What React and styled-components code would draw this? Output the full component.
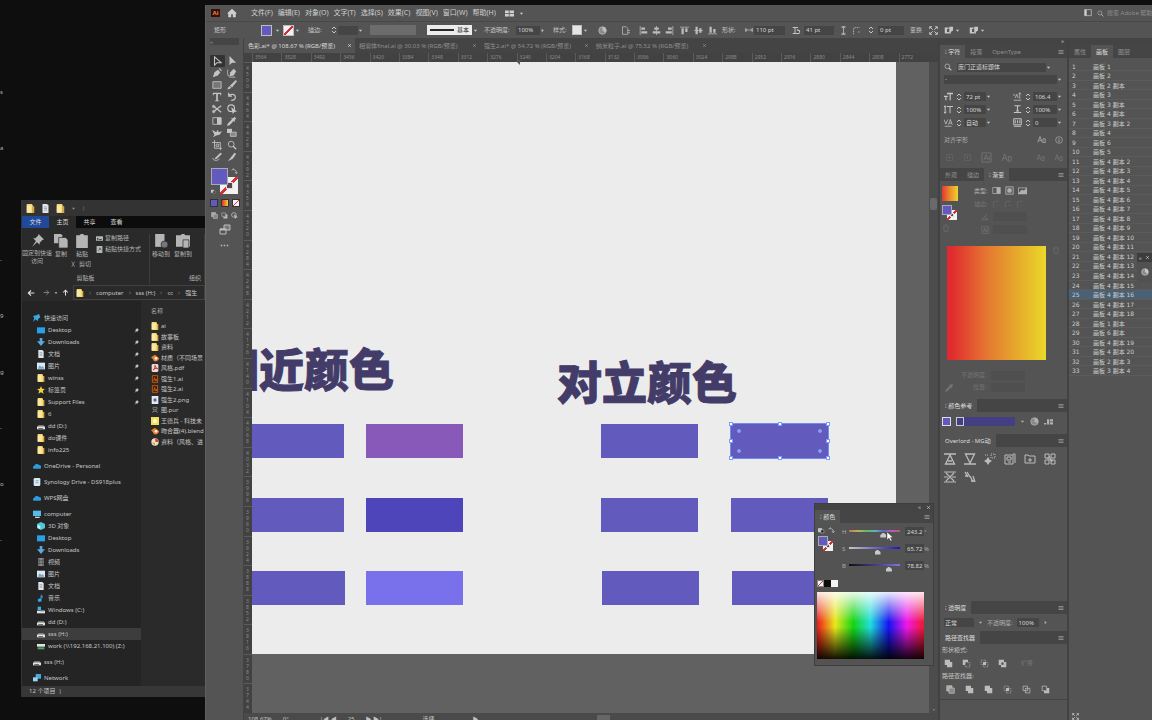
// src/App.jsx
import React, { useState } from 'react';
import styled, { createGlobalStyle, css } from 'styled-components';

const GlobalStyle = createGlobalStyle`
  * {
    box-sizing: border-box;
  }
  html, body, #root {
    height: 100%;
    margin: 0;
  }
  body {
    overflow: hidden;
    background: #0d0e0d;
    font-family: 'Noto Sans', 'Noto Sans CJK SC', sans-serif;
    font-size: 6px;
    line-height: 8px;
    color: #c6c6c6;
  }
  button, input, select {
    font: inherit;
    color: inherit;
    background: none;
    border: 0;
    padding: 0;
    margin: 0;
    min-width: 0;
  }
  button {
    display: inline-flex;
    align-items: center;
    justify-content: center;
    white-space: nowrap;
  }
  select {
    appearance: none;
  }
  a {
    color: inherit;
    text-decoration: none;
  }
`;

/* ---------- icons, all drawn on a 12 x 12 grid ---------- */

const solid = { fill: 'currentColor', stroke: 'none' };

const glyphs = {
  caret: <path {...solid} d="M2 4h8l-4 5z" />,
  right: <path {...solid} d="M4 2l5 4-5 4z" />,
  close: <path d="M3 3l6 6M9 3l-6 6" strokeWidth="2" />,
  menu: <path d="M1 3h10M1 6h10M1 9h10" strokeWidth="1.400" />,
  step: <path d="M3 4.500l3-3 3 3M3 7.500l3 3 3-3" strokeWidth="1.500" />,
  home: <path {...solid} d="M6 1L0 6.500h1.500V11H5V7.500h2V11h3.500V6.500H12z" />,
  search: <><circle cx="5" cy="5" r="3.500" /><path d="M7.500 7.500L11 11" strokeWidth="1.600" /></>,
  grid: <path {...solid} d="M0 2h5v3.500H0zM6 2h6v3.500H6zM0 6.500h5V10H0zM6 6.500h6V10H6z" />,
  select: <path d="M3 1v10l3-3h5z" strokeWidth="1.300" />,
  direct: <path {...solid} d="M3 0v11l3-3h5z" />,
  pen: <path {...solid} d="M1 11l2-6 4-3 3 3-3 4zM8 1l1-1 3 3-1 1z" />,
  curve: <><path {...solid} d="M3 10l1-5 4-4 3 3-3 5z" /><path d="M1 2c-1 5 0 9 4 9h5" /></>,
  rect: <path d="M1 2h10v8H1z" fill="#777" />,
  brush: <path {...solid} d="M10.500 0L12 1.500 6 9 3.500 7zM3 7.500l2 1.500c-1 2-3 2-5 2 2-1 1-3 3-3.500z" />,
  type: <path {...solid} d="M1 1h10v3H10L9.500 2.500H7V10l1.500.5v.5h-5v-.5L5 10V2.500H2.500L2 4H1z" />,
  rotate: <path d="M2 1v4h4M2 5c1-3 8-3 8 1 0 3-3 4-5 4" strokeWidth="1.400" />,
  scissors: <><path d="M1 2l10 8M1 10l10-8" strokeWidth="1.500" /><circle cx="2" cy="9" r="1.500" /><circle cx="2" cy="3" r="1.500" /></>,
  shape: <><circle cx="5" cy="5" r="4" strokeWidth="1.400" /><path {...solid} d="M5 4l7 5-3 .5L7 12z" /></>,
  gradient: <><path d="M1 2h10v8H1z" /><path {...solid} d="M6 2h5v8H6z" /></>,
  dropper: <path {...solid} d="M0 12l1-3 5-5-1-1 1-1 1 1 2-2 2 2-2 2 1 1-1 1-1-1-5 5z" />,
  width: <path {...solid} d="M0 2l5 3 2-3 1 3 4-1-3 4-4 1-4 2 2-3z" />,
  blend: <><path {...solid} d="M0 1h6v5H0z" /><path d="M4 5h7v5H4z" fill="#888" /></>,
  artboard: <path d="M3 0v10h9M0 3h10v9M5 5h3v3H5z" />,
  eraser: <><path d="M1 7c0 4 6 4 8 1" /><path {...solid} d="M4 7l6-6 2 1-6 6-3 1z" /></>,
  knife: <path {...solid} d="M1 11L9 1l2 1-4 6z" />,
  screens: <><path d="M5 1h6v5H5z" fill="#777" /><path d="M1 5h6v5H1z" fill="#535353" /><path d="M1 5.500h6" strokeWidth="2" /></>,
  dots: <path {...solid} d="M1 5h2v2H1zM5 5h2v2H5zM9 5h2v2H9z" />,
  swap: <path d="M1 4l3-3v2c3 0 5 1 5 5M7 7l2 3 2-3" strokeWidth="1.300" />,
  mini: <><path {...solid} d="M0 2h7v7H0z" /><path d="M5 5h5v5H5z" fill="#111" /></>,
  globe: <><circle cx="6" cy="6" r="5" fill="#8a8a8a" /><path {...solid} d="M6 1a5 5 0 0 1 4 8L6 6z" /></>,
  docset: <path d="M2 1h5l2 2v8H2zM9 6h3M9 9h3" />,
  alignL: <path {...solid} d="M1 0h1v12H1zM3 2h5v3H3zM3 7h8v3H3z" />,
  alignC: <path {...solid} d="M5.500 0h1v12h-1zM3 2h6v3H3zM1 7h10v3H1z" />,
  alignR: <path {...solid} d="M10 0h1v12h-1zM4 2h5v3H4zM1 7h8v3H1z" />,
  alignT: <path {...solid} d="M0 1h12v1H0zM2 3h3v8H2zM7 3h3v5H7z" />,
  alignM: <path {...solid} d="M0 5.500h12v1H0zM2 1h3v10H2zM7 3h3v6H7z" />,
  alignB: <path {...solid} d="M0 10h12v1H0zM2 1h3v8H2zM7 4h3v5H7z" />,
  width2: <path d="M1 3v6M11 3v6M1 6h10M3 4L1 6l2 2M9 4l2 2-2 2" />,
  link: <path d="M1 2h7M1 10h9M4 2v8M7 4l3 3M7 6h3v3" strokeWidth="1.300" />,
  height: <path d="M3 1h6M3 11h6M6 1v10M4 3l2-2 2 2M4 9l2 2 2-2" />,
  corner: <path d="M2 11V5c0-2 1-3 3-3h5M8 8h3" strokeDasharray="2 1" />,
  scatter: <path d="M1 1l4 4M11 1L7 5M1 11l4-4M11 11L7 7M1 4V1h3M8 1h3v3M11 8v3H8M4 11H1V8" strokeWidth="1.300" />,
  edit: <path {...solid} d="M1 2h5v2H4v4h3v2H1zM7 1h5v5L9 8v3L7 9z" />,
  window: <><path d="M1 1h10v9H1z" /><path {...solid} d="M1 1h3v9H1z" /></>,
  info: <><circle cx="6" cy="6" r="5" /><path d="M6 5v4M6 3v1" strokeWidth="1.400" /></>,
  sizeT: <path {...solid} d="M4 1h8v2h-3v8H7.500V3H4zM0 5h5v1.500H3.300V11H1.800V6.500H0z" />,
  leading: <path d="M1 11h10M3 8l2-5 2 5M9 1v8M7.500 3L9 1l1.500 2M0 4h3" />,
  vscale: <path d="M4 2h8M8 2v9M1.500 1v10M0 3l1.500-2L3 3M0 9l1.500 2L3 9" strokeWidth="1.300" />,
  hscale: <path d="M2 1h8M6 1v7M1 10h10M4 8h4" strokeWidth="1.500" />,
  kern: <path d="M0 2l2.500 6L5 2M6 9l2.500-7L11 9M7 7h3M1 11h9" />,
  track: <path d="M1 1h10v8H1zM3 7V3M6 7V3M9 7V3M1 11h10" strokeWidth="1.300" />,
  glyphBox: <path d="M1 1h10v10H1zM3 9l2.500-6L8 9M4 7h3M9 4v5" />,
  glyphA: <path d="M1 10l3-8 3 8M2 7h4M8 5h3v5H8z" />,
  dashed: <path d="M2 2h8v8H2zM4 6h4M6 4v4" strokeDasharray="1 1" />,
  angle: <path d="M1 10L9 2M1 10h10M6 5c2 1 2 3 2 5" />,
  radial: <><path d="M1 1h10v10H1z" fill="#666" /><circle cx="6" cy="6" r="3" {...solid} /></>,
  free: <path {...solid} d="M0 2h12v9H0zM1 3v6l4-4 3 1 3-3z" fillRule="evenodd" />,
  trash: <path d="M2 3h8M3 3v8h6V3M5 1h2" />,
  triUp: <path d="M0 1h12M6 2L1.500 11h9zM4 8h4" strokeWidth="1.300" />,
  triDown: <path d="M0 11h12M6 10L1.500 1h9z" strokeWidth="1.300" />,
  sparkle: <><path {...solid} d="M4 4l1.500 2.500L8 8 5.500 9.500 4 12 2.500 9.500 0 8l2.500-1.500z" /><path d="M7 1h4v4H7zM1 2h3" strokeDasharray="1 1" /></>,
  boxes: <path d="M1 2h8v9H1zM9 1h2v9M3 4h4v3H3zM4 9h3" />,
  folderPlus: <path d="M1 10V2h3l1 1h6v7zM6 5v4M4 7h4" />,
  puzzle: <path d="M1 1h4v4H1zM7 1h4v4H7zM1 7h4v4H1zM7 7h4v4H7zM5 3l3 6M3 5l6 3" />,
  burst: <path d="M0 1h12M0 11h12M2 2l8 8M10 2l-8 8M0 6h4M8 6h4" strokeWidth="1.100" />,
  bones: <path d="M1 1l3 5M3 1l3 5M6 5l3 6M9 5l2 6M1 5h3M7 10h4" strokeWidth="1.300" />,
  unite: <path {...solid} d="M1 1h7v3h3v7H4V8H1z" />,
  minus: <><path {...solid} d="M1 1h7v3H4v4H1z" /><path d="M4.500 4.500h6v6h-6z" strokeDasharray="1 1" /></>,
  intersect: <><path {...solid} d="M4 4h4v4H4z" /><path d="M1.500 1.500h6v6h-6zM4.500 4.500h6v6h-6z" strokeDasharray="1 1" /></>,
  exclude: <path {...solid} fillRule="evenodd" d="M1 1h7v3h3v7H4V8H1zM4.500 4.500v3h3v-3z" />,
  divide: <><path d="M1 1h7v7H1z" fill="#aaa" /><path d="M4 4h7v7H4z" fill="#888" /></>,
  outline: <path d="M1.500 1.500h6v6h-6zM4.500 4.500h6v6h-6z" />,
  back: <><path {...solid} d="M4 8h4V4h3v7H4z" /><path d="M1.500 1.500h6v6h-6z" /></>,
  harmony: <path {...solid} d="M0 8h3v2H0zM4 3h3v7H4zM8 3h4v3H8zM8 7h4v3H8z" />,
  pushpin: <path {...solid} d="M7 0l5 5-1.500.5-2.500 2.500v2L5.500 7.500 1 12l3.500-5.500L2 4h2l2.500-2.500z" />,
  copy: <><path {...solid} d="M0 0h6l1 1v7H0z" /><path d="M4 3h6l2 2v7H4z" fill="currentColor" stroke="#2b2b2b" strokeWidth=".6" /></>,
  clip: <path {...solid} d="M1 1h3l1-1h2l1 1h3v11H1z" />,
  clipPage: <><path {...solid} d="M0 1h4l1-1h2l1 1h4v10H0z" /><path d="M6 5h5v7H6z" fill="currentColor" stroke="#2b2b2b" strokeWidth=".6" /></>,
  moveTo: <><path {...solid} d="M1 0h8v11H1z" /><circle cx="9" cy="9" r="3" fill="#777" stroke="#2b2b2b" strokeWidth=".6" /></>,
  path: <path {...solid} fillRule="evenodd" d="M0 2h12v8H0zM2 5v3h2V5zM5 7v1h5V7z" />,
  shortcut: <><path {...solid} d="M1 0h10v12H1z" /><path d="M4 8l3-3M5 4h3v3" stroke="#333" /></>,
  cut: <path d="M3 1l5 9M8 1L3 10" />,
  left: <path d="M11 6H2M6 2L2 6l4 4" strokeWidth="1.800" />,
  forward: <path d="M1 6h9M6 2l4 4-4 4" strokeWidth="1.500" />,
  up: <path d="M6 11V2M2 6l4-4 4 4" strokeWidth="1.800" />,
  chevron: <path d="M4 2l4 4-4 4" />,
  folder: <><path d="M1 0h7l1 2v10H1z" {...solid} fill="#f3d66f" /><path {...solid} fill="#fae9a6" d="M1 2h6v9H1z" /><path {...solid} fill="#dca93c" d="M9 3h2v9H9z" /></>,
  doc: <><path {...solid} fill="#e2e6ea" d="M2 0h6l2 2v10H2z" /><path d="M4 4h4M4 6h4M4 8h4" stroke="#8b98a5" /></>,
  star: <path {...solid} fill="#f6cf3e" d="M6 0l1.700 4.200L12 4.500 8.700 7.300l1.200 4.500L6 9.300l-3.900 2.500 1.200-4.500L0 4.500l4.300-.3z" />,
  blueStar: <path {...solid} fill="#3ba7e4" d="M9 0l2 5-3 2-1 4-3-3-4 4 2-6-2-3 5-1z" />,
  desktop: <path {...solid} fill="#27a0ea" d="M0 2h12v9H0z" />,
  download: <path {...solid} fill="#5aa9dc" d="M4 0h4v5h4l-6 7-6-7h4z" />,
  picture: <><path {...solid} fill="#dfe9f1" d="M0 1h12v10H0z" /><path {...solid} fill="#6fa6cb" d="M1 10l3-5 3 3 2-2 2 4z" /></>,
  drive: <><path {...solid} fill="#8e8e8e" d="M2 5h8l2 3H0z" /><path {...solid} fill="#e2e2e2" d="M0 7h12v4H0z" /><path {...solid} fill="#333" d="M2 9h7v1H2z" /></>,
  winDrive: <><path {...solid} fill="#e2e2e2" d="M0 7h12v4H0z" /><path {...solid} fill="#35b0e8" d="M1 1h5v5H1z" /><path {...solid} fill="#777" d="M5 6h6v2H5z" /></>,
  netDrive: <><path {...solid} fill="#e2e2e2" d="M0 3h12v4H0z" /><path {...solid} fill="#49a85b" d="M1 8h10v3H1z" /></>,
  cloud: <path {...solid} fill="#2e9bdd" d="M1 10a2.500 2.500 0 0 1 1-4.500 4 4 0 0 1 7-1A3 3 0 0 1 11 10z" />,
  synology: <><rect {...solid} fill="#dce7ee" x="1" y="0" width="10" height="12" rx="2" /><path d="M4 4h4M4 7h4" stroke="#4b92c0" /></>,
  pc: <><path {...solid} fill="#58b9ee" d="M0 1h12v8H0z" /><path {...solid} fill="#c8d4db" d="M3 10h7v2H3z" /></>,
  cube: <><path {...solid} fill="#4fc7dc" d="M6 0l6 3v6l-6 3-6-3V3z" /><path {...solid} fill="#c9f1f5" d="M1 4l4 2v5L1 9z" /></>,
  film: <><path {...solid} fill="#8d8f92" d="M2 0h8v12H2z" /><path d="M4 1v10M8 1v10M2 4h8M2 8h8" stroke="#4a4a4a" /></>,
  note: <path {...solid} fill="#3aa0e0" d="M6 0c1 3 4 3 3 7 0-2-1-2.500-2-3v5a3 2.500 0 1 1-2-2z" />,
  network: <><path {...solid} fill="#4da7df" d="M4 0h8v7H4z" /><path {...solid} fill="#9cd4ef" d="M0 5h7v6H0z" /></>,
  blender: <><path {...solid} fill="#e8802a" d="M0 5l6-4 6 5c0 6-9 7-9 2z" /><circle {...solid} fill="#f6f6f6" cx="7.500" cy="6.500" r="2" /></>,
  pdf: <><rect {...solid} fill="#ead9d6" x="1" y="0" width="10" height="12" rx="2" /><path d="M3 9c3-2 3-4 3-7 1 4 2 4 4 5-3-1-5 0-7 2z" stroke="#c92b21" strokeWidth="1.400" /></>,
  aiFile: <><path {...solid} fill="#4a1a00" d="M1 0h10v12H1z" /><path d="M2 1h8v10H2zM4 9l1.500-5L7 9M8.500 6v3" stroke="#e8812a" /></>,
  png: <><path {...solid} fill="#e6e9ee" d="M1 0h10v12H1z" /><circle {...solid} fill="#4a6aa8" cx="6" cy="6" r="2.500" /></>,
  pur: <path d="M3 2h6v3H3zM2 10l3-4M10 10L7 6M3 8h6" stroke="#999" />,
  yellow: <><path {...solid} fill="#f4df5c" d="M0 0h12v12H0z" /><circle cx="6" cy="6" r="3" {...solid} fill="#fffbd0" /></>,
  palette: <><circle {...solid} cx="6" cy="6" r="5.500" fill="#eadfca" /><path {...solid} fill="#d23d32" d="M6 1a5 5 0 0 1 5 5L7 6z" /><path {...solid} fill="#d8a23a" d="M1 7h5v4z" /></>,
};

const Svg = styled.svg`
  flex: none;
  display: block;
`;

const Icon = ({ name, size = 9, color }) => (
  <Svg
    width={size}
    height={size}
    viewBox="0 0 12 12"
    fill="none"
    stroke="currentColor"
    color={color}
    aria-hidden="true"
  >
    {glyphs[name]}
  </Svg>
);

/* ---------- desktop ---------- */

const Desktop = styled.div`
  position: relative;
  height: 100vh;
  min-height: 700px;
  overflow: hidden;
  background: #0d0e0d;
`;

const DesktopIcons = styled.div`
  display: flex;
  flex-direction: column;
  gap: 48px;
  width: 4px;
  padding-top: 88px;
  overflow: hidden;
  color: #b4b4b4;

  span {
    flex: none;
    height: 8px;
  }
`;

/* ---------- file explorer ---------- */

const ExplorerWindow = styled.section`
  position: absolute;
  left: 21px;
  top: 200px;
  bottom: 23px;
  width: 184px;
  display: flex;
  flex-direction: column;
  overflow: hidden;
  white-space: nowrap;
  background: #2a2a2a;
  border-left: 1px solid #333;
`;

const ExplorerTitle = styled.header`
  display: flex;
  align-items: center;
  gap: 6px;
  height: 16px;
  padding-left: 4px;
  background: #333;
  color: #888;
`;

const RibbonTabs = styled.nav`
  display: flex;
  height: 12px;
  background: #0c0c0c;
`;

const RibbonTab = styled.button`
  width: 27px;
  background: ${(p) => p.$bg || 'transparent'};
  color: #dedede;
`;

const Ribbon = styled.div`
  display: flex;
  height: 56px;
  padding-top: 6px;
  color: #b5b5b5;
`;

const RibbonGroup = styled.div`
  display: grid;
  grid-template-rows: 1fr 10px;
  flex: none;
  width: ${(p) => p.$w}px;
  border-right: 1px solid #3d3d3d;
  text-align: center;
`;

const GroupName = styled.span`
  padding-right: ${(p) => (p.$end ? 3 : 0)}px;
  text-align: ${(p) => (p.$end ? 'right' : 'center')};
`;

const RibbonButtons = styled.div`
  display: flex;
  align-items: flex-start;
`;

const BigButton = styled.button`
  flex-direction: column;
  gap: 2px;
  width: ${(p) => p.$w || 22}px;
  white-space: normal;
`;

const SmallButtons = styled.div`
  display: flex;
  flex-direction: column;
  gap: 3px;
  padding-left: 2px;
`;

const SmallButton = styled.button`
  justify-content: flex-start;
  gap: 2px;
`;

const PasteColumn = styled.div`
  display: flex;
  flex-direction: column;
  gap: 2px;
`;

const AddressBar = styled.nav`
  display: flex;
  align-items: center;
  height: 17px;
  padding-left: 5px;
  gap: 4px;
`;

const Crumbs = styled.div`
  display: flex;
  align-items: center;
  gap: 4px;
  flex: 1;
  height: 15px;
  padding-left: 2px;
  border: 1px solid #414141;
`;

const ExplorerBody = styled.div`
  display: flex;
  flex: 1;
  min-height: 0;
`;

const Sidebar = styled.nav`
  width: 119px;
  padding-top: 11px;
  background: #242424;
`;

const SideLink = styled.a`
  display: flex;
  align-items: center;
  gap: 3px;
  height: 12px;
  margin-top: ${(p) => (p.$gap ? 4 : 0)}px;
  padding-left: ${(p) => (p.$top ? 11 : 15)}px;
  padding-right: 2px;
  background: ${(p) => (p.$active ? '#3d3d3d' : 'transparent')};
`;

const SideText = styled.span`
  flex: 1;
`;

const FilePane = styled.div`
  flex: 1;
  min-width: 0;
  padding: 6px 0 0 10px;
`;

const FileHeading = styled.div`
  height: 14px;
  color: #a5a5a5;
`;

const FileList = styled.ul`
  display: flex;
  flex-direction: column;
  height: 126px;
  margin: 0;
  padding: 0;
  list-style: none;
`;

const FileItem = styled.li`
  display: flex;
  flex: 1;
  align-items: center;
  gap: 2px;
`;

const ExplorerStatus = styled.footer`
  height: 11px;
  padding: 1px 7px;
  background: #373737;
`;

const quickLinks = [
  ['blueStar', '快速访问', { $top: true }],
  ['desktop', 'Desktop', {}, true],
  ['download', 'Downloads', {}, true],
  ['doc', '文档', {}, true],
  ['picture', '图片', {}, true],
  ['folder', 'winss', {}, true],
  ['star', '标签页', {}, true],
  ['folder', 'Support Files', {}, true],
  ['folder', '6', {}],
  ['drive', 'dd (D:)', {}],
  ['folder', 'do课件', {}],
  ['folder', 'info225', {}],
  ['cloud', 'OneDrive - Personal', { $top: true, $gap: true }],
  ['synology', 'Synology Drive - DS918plus', { $top: true, $gap: true }],
  ['cloud', 'WPS网盘', { $top: true, $gap: true }],
  ['pc', 'computer', { $top: true, $gap: true }],
  ['cube', '3D 对象', {}],
  ['desktop', 'Desktop', {}],
  ['download', 'Downloads', {}],
  ['film', '视频', {}],
  ['picture', '图片', {}],
  ['doc', '文档', {}],
  ['note', '音乐', {}],
  ['winDrive', 'Windows (C:)', {}],
  ['drive', 'dd (D:)', {}],
  ['drive', 'sss (H:)', { $active: true }],
  ['netDrive', 'work (\\\\192.168.21.100) (Z:)', {}],
  ['drive', 'sss (H:)', { $top: true, $gap: true }],
  ['network', 'Network', { $top: true, $gap: true }],
];

const files = [
  ['folder', 'ai'],
  ['folder', '故事板'],
  ['folder', '资料'],
  ['blender', '材质（不同场景'],
  ['pdf', '风格.pdf'],
  ['aiFile', '强生1.ai'],
  ['aiFile', '强生2.ai'],
  ['png', '强生2.png'],
  ['pur', '图.pur'],
  ['yellow', '王德兵 - 科技未'],
  ['blender', '吻合器(4).blend'],
  ['palette', '资料（风格、进'],
];

const Explorer = () => (
  <ExplorerWindow>
    <ExplorerTitle>
      <Icon name="folder" />
      <Icon name="doc" />
      <Icon name="folder" />
      <Icon name="caret" size={5} />
      <span>|</span>
    </ExplorerTitle>
    <RibbonTabs>
      <RibbonTab $bg="#21499b">文件</RibbonTab>
      <RibbonTab $bg="#2a2a2a">主页</RibbonTab>
      <RibbonTab>共享</RibbonTab>
      <RibbonTab>查看</RibbonTab>
    </RibbonTabs>
    <Ribbon>
      <RibbonGroup $w={128}>
        <RibbonButtons>
          <BigButton $w={30}><Icon name="pushpin" size={13} />固定到快速访问</BigButton>
          <BigButton $w={18}><Icon name="copy" size={14} />复制</BigButton>
          <PasteColumn>
            <BigButton $w={24}><Icon name="clip" size={14} />粘贴</BigButton>
            <SmallButton><Icon name="cut" size={7} />剪切</SmallButton>
          </PasteColumn>
          <SmallButtons>
            <SmallButton><Icon name="path" size={7} />复制路径</SmallButton>
            <SmallButton><Icon name="shortcut" size={7} />粘贴快捷方式</SmallButton>
          </SmallButtons>
        </RibbonButtons>
        <GroupName>剪贴板</GroupName>
      </RibbonGroup>
      <RibbonGroup $w={55}>
        <RibbonButtons>
          <BigButton><Icon name="moveTo" size={14} />移动到</BigButton>
          <BigButton><Icon name="clipPage" size={14} />复制到</BigButton>
        </RibbonButtons>
        <GroupName $end>组织</GroupName>
      </RibbonGroup>
    </Ribbon>
    <AddressBar>
      <Icon name="left" size={8} color="#e0e0e0" />
      <span />
      <Icon name="forward" size={7} color="#8a8a8a" />
      <Icon name="caret" size={4} />
      <Icon name="up" size={7} color="#e0e0e0" />
      <Crumbs>
        <Icon name="folder" size={8} />
        <Icon name="chevron" size={4} />
        <a href="#computer">computer</a>
        <Icon name="chevron" size={4} />
        <a href="#sss">sss (H:)</a>
        <Icon name="chevron" size={4} />
        <a href="#cc">cc</a>
        <Icon name="chevron" size={4} />
        <a href="#qs">强生</a>
      </Crumbs>
    </AddressBar>
    <ExplorerBody>
      <Sidebar>
        {quickLinks.map(([icon, label, look, pinned], i) => (
          <SideLink key={i} href="#folder" {...look}>
            <Icon name={icon} size={8} />
            <SideText>{label}</SideText>
            {pinned && <Icon name="pushpin" size={5} />}
          </SideLink>
        ))}
      </Sidebar>
      <FilePane>
        <FileHeading>名称</FileHeading>
        <FileList>
          {files.map(([icon, label]) => (
            <FileItem key={label}>
              <Icon name={icon} size={8} />
              {label}
            </FileItem>
          ))}
        </FileList>
      </FilePane>
    </ExplorerBody>
    <ExplorerStatus>12 个项目 &nbsp;|</ExplorerStatus>
  </ExplorerWindow>
);

/* ---------- illustrator frame ---------- */

const AppWindow = styled.section`
  position: absolute;
  left: 205px;
  top: 5px;
  right: 0;
  bottom: 0;
  display: flex;
  flex-direction: column;
  white-space: nowrap;
  background: #535453;
  border-left: 1px solid #5f5f5f;
`;

const MenuBar = styled.header`
  display: flex;
  align-items: center;
  gap: 5px;
  height: 16px;
  padding-left: 5px;
  font-size: 7px;
  color: #cfcfcf;
`;

const AppLogo = styled.span`
  width: 9px;
  height: 8px;
  margin-right: 2px;
  background: #35100a;
  color: #e88433;
  font-size: 6px;
  font-weight: 700;
  text-align: center;
`;

const MenuItems = styled.nav`
  display: flex;
  gap: 5px;
  padding: 0 4px 0 9px;
`;

const MenuSearch = styled.label`
  display: flex;
  align-items: center;
  gap: 3px;
  width: 55px;
  font-size: 6px;
  color: #bbb;

  input {
    width: 46px;
    color: #8d8d8d;
  }
  input::placeholder {
    color: #8d8d8d;
  }
`;

const Spacer = styled.span`
  flex: 1;
`;

const ControlBar = styled.div`
  display: grid;
  grid-template-columns:
    47px 14px 8px 12px 13px 22px 8px 20px 12px 57px 46px 11px 32px 24px 13px 19px 11px 15px
    23px 18px 13px 13px 15px 14px 14px 14px 23px 9px 38px 12px 35px 13px 15px 11px 32px
    19px 15px 11px 14px 11px 1fr;
  align-items: center;
  height: 17px;
  padding-left: 8px;
  border-top: 1px solid #484848;
`;

const Swatch = styled.button`
  width: ${(p) => p.$size || 11}px;
  height: ${(p) => p.$size || 11}px;
  border: 1px solid ${(p) => p.$edge || '#bdbdbd'};
  background: ${(p) => p.$fill};
`;

const noPaint = 'linear-gradient(-45deg, transparent 44%, #d5303a 44% 56%, transparent 56%), #f2f2f2';

const Field = styled.input`
  width: ${(p) => (p.$w ? `${p.$w}px` : '100%')};
  height: 9px;
  padding-left: 2px;
  background: ${(p) => (p.$dim ? '#4f4f4f' : '#454545')};
  color: ${(p) => (p.$dim ? '#6f6f6f' : '#d8d8d8')};
`;

const StrokeProfile = styled.button`
  width: 46px;
  height: 10px;
  background: #6c6c6c;
`;

const BrushPicker = styled.button`
  gap: 3px;
  width: 45px;
  height: 10px;
  background: #ececec;
  color: #222;

  i {
    width: 24px;
    height: 2px;
    background: #2a2a2a;
  }
`;

const IconButton = styled.button`
  color: ${(p) => (p.$dim ? '#747474' : '#bcbcbc')};
  justify-content: ${(p) => (p.$start ? 'flex-start' : 'center')};
`;

const Workspace = styled.div`
  display: grid;
  grid-template-columns: 38px minmax(0, 1fr) 129px 85px;
  flex: 1;
  min-height: 0;
`;

/* ---------- tools ---------- */

const ToolPanel = styled.aside`
  display: flex;
  flex-direction: column;
  align-items: center;
  gap: 5px;
  padding: 0 4px;
  border-right: 1px solid #434343;
`;

const ToolHandle = styled.div`
  width: 100%;
  height: 12px;
  color: #999;
  background: linear-gradient(#454545 7px, transparent 7px);
`;

const ToolGrid = styled.div`
  display: grid;
  grid-template-columns: 15px 15px;
  grid-auto-rows: 12px;
`;

const Tool = styled.button`
  background: ${(p) => (p.$active ? '#333' : 'transparent')};
  color: #c4c4c4;
  border-radius: 1px;
`;

const FillStroke = styled.div`
  position: relative;
  width: ${(p) => (p.$small ? 15 : 27)}px;
  height: ${(p) => (p.$small ? 15 : 26)}px;

  svg {
    position: absolute;
  }
  svg:first-child {
    right: 0;
    top: 0;
  }
  svg:last-child {
    left: 0;
    bottom: 0;
  }
`;

const StrokeBox = styled.span`
  position: absolute;
  right: 0;
  bottom: 0;
  width: 65%;
  height: 65%;
  background: ${noPaint};

  &::after {
    content: '';
    position: absolute;
    inset: 30%;
    border: 1px solid #ddd;
    background: #55464a;
  }
`;

const FillBox = styled.span`
  position: absolute;
  left: 0;
  top: 0;
  width: 64%;
  height: 64%;
  border: 1px solid #a9a9b8;
  background: #625bbd;
`;

const ToolRow = styled.div`
  display: flex;
  gap: 3px;
`;

const tools = [
  'select', 'direct', 'pen', 'curve', 'rect', 'brush', 'type', 'rotate', 'scissors',
  'shape', 'gradient', 'dropper', 'width', 'blend', 'artboard', 'search', 'eraser', 'knife',
];

const Tools = () => {
  const [active, setActive] = useState('select');
  return (
    <ToolPanel>
      <ToolHandle>«</ToolHandle>
      <ToolGrid>
        {tools.map((t) => (
          <Tool key={t} aria-label={t} $active={t === active} onClick={() => setActive(t)}>
            <Icon name={t} size={10} />
          </Tool>
        ))}
      </ToolGrid>
      <FillStroke>
        <Icon name="swap" size={7} />
        <StrokeBox />
        <FillBox />
        <Icon name="mini" size={5} />
      </FillStroke>
      <ToolRow>
        <Swatch aria-label="fill" $size={8} $fill="#625bbd" $edge="#333" />
        <Swatch aria-label="gradient" $size={8} $fill="linear-gradient(90deg, #e02f2f, #f5d22b)" $edge="#333" />
        <Swatch aria-label="none" $size={8} $fill={noPaint} $edge="#333" />
      </ToolRow>
      <ToolRow>
        <IconButton aria-label="draw normal"><Icon name="divide" size={7} /></IconButton>
        <IconButton aria-label="draw behind"><Icon name="back" size={7} /></IconButton>
        <IconButton aria-label="draw inside"><Icon name="shape" size={7} /></IconButton>
      </ToolRow>
      <IconButton aria-label="screen mode"><Icon name="screens" size={12} /></IconButton>
      <IconButton aria-label="more tools"><Icon name="dots" size={9} /></IconButton>
    </ToolPanel>
  );
};

/* ---------- document ---------- */

const DocumentArea = styled.main`
  display: flex;
  flex-direction: column;
  min-width: 0;
`;

const DocTabs = styled.nav`
  display: flex;
  height: 15px;
  background: #434443;
`;

const DocTab = styled.button`
  justify-content: space-between;
  width: ${(p) => p.$w}px;
  padding: 0 3px 0 4px;
  background: ${(p) => (p.$active ? '#525352' : 'transparent')};
  color: ${(p) => (p.$active ? '#dadada' : '#8f8f8f')};
`;

const TopRuler = styled.div`
  display: flex;
  height: 9px;
  padding: 0 10px 0 8px;
  background: #414241;
  color: #8b8b8b;
  font-size: 5px;

  span {
    flex: 1;
    padding-left: 2px;
    border-left: 1px solid #5b5b5b;
  }
`;

const CanvasRow = styled.div`
  display: flex;
  flex: 1;
  min-height: 0;
`;

const SideRuler = styled.div`
  display: flex;
  flex-direction: column;
  width: 8px;
  background: #414241;
  color: #8b8b8b;
  font-size: 5px;
  line-height: 6px;

  span {
    flex: 1;
    padding: 2px 2px 0;
    border-top: 1px solid #5b5b5b;
    white-space: normal;
    word-break: break-all;
  }
`;

const Canvas = styled.div`
  position: relative;
  flex: 1;
  overflow: hidden;
  background: #616161;
`;

const Artboard = styled.div`
  position: absolute;
  left: 0;
  top: 0;
  width: 644px;
  height: 592px;
  background: #ececec;
`;

const Heading = styled.h2`
  position: absolute;
  left: ${(p) => p.$x}px;
  top: ${(p) => p.$y}px;
  margin: 0;
  font: 900 45px/48px 'Noto Sans CJK SC', sans-serif;
  color: #433b68;
  -webkit-text-stroke: 1px #433b68;
`;

const Shape = styled.div`
  position: absolute;
  left: ${(p) => p.$x}px;
  top: ${(p) => p.$y}px;
  width: 97px;
  height: 34px;
  background: ${(p) => p.$fill || '#625bbd'};
  ${(p) =>
    p.$selected &&
    css`
      outline: 1px solid #6f8cf0;
    `}
`;

const Handle = styled.i`
  position: absolute;
  left: ${(p) => p.$x}%;
  top: ${(p) => p.$y}%;
  width: 4px;
  height: 4px;
  margin: -2px;
  border: 1px solid #7f9cf5;
  border-radius: ${(p) => (p.$round ? '50%' : 0)};
  background: ${(p) => (p.$round ? '#8fa2ee' : '#fff')};
`;

const ScrollTrack = styled.div`
  display: flex;
  flex-direction: column;
  align-items: center;
  width: 9px;
  padding: 136px 0 1px;
  background: #4c4c4c;
  color: #888;

  i {
    width: 7px;
    height: 12px;
    margin-bottom: auto;
    border-radius: 2px;
    background: #6a6a6a;
  }
`;

const DocStatus = styled.footer`
  display: flex;
  gap: 11px;
  height: 7px;
  padding: 2px 0 0 4px;
  overflow: hidden;
  background: #4a4a4a;
  color: #c2c2c2;

  i {
    width: 13px;
    height: 5px;
    margin-left: 108px;
    background: #666;
  }
`;

const StatusGap = styled.span`
  width: ${(p) => p.$w}px;
`;

const shapes = [
  { x: -5, y: 362 },
  { x: 114, y: 362, fill: '#8859b8' },
  { x: 349, y: 362 },
  { x: 479, y: 362, selected: true },
  { x: -5, y: 436 },
  { x: 114, y: 436, fill: '#4f45ba' },
  { x: 349, y: 436 },
  { x: 479, y: 436 },
  { x: -4, y: 509 },
  { x: 114, y: 509, fill: '#7871eb' },
  { x: 350, y: 509 },
  { x: 480, y: 509 },
];

const handles = [
  [0, 0], [50, 0], [100, 0], [0, 50], [100, 50], [0, 100], [50, 100], [100, 100],
  [8, 22, true], [92, 22, true], [8, 78, true], [92, 78, true],
];

const Document = () => (
  <DocumentArea>
    <DocTabs>
      <DocTab $w={111} $active>色彩.ai* @ 108.67 % (RGB/预览)<Icon name="close" size={5} /></DocTab>
      <DocTab $w={125}>相溶体final.ai @ 30.03 % (RGB/预览)<Icon name="close" size={5} /></DocTab>
      <DocTab $w={112}>强生2.ai* @ 54.72 % (RGB/预览)<Icon name="close" size={5} /></DocTab>
      <DocTab $w={118}>纳米粒子.ai @ 75.52 % (RGB/预览)<Icon name="close" size={5} /></DocTab>
    </DocTabs>
    <TopRuler>
      {Array.from({ length: 23 }, (_, i) => (
        <span key={i}>{3564 - i * 36}</span>
      ))}
    </TopRuler>
    <CanvasRow>
      <SideRuler>
        {Array.from({ length: 22 }, (_, i) => (
          <span key={i}>{4500 - i * 36}</span>
        ))}
      </SideRuler>
      <Canvas>
        <Artboard>
          <Heading $x={-38} $y={282}>相近颜色</Heading>
          <Heading $x={305} $y={295}>对立颜色</Heading>
          {shapes.map((s, i) => (
            <Shape key={i} $x={s.x} $y={s.y} $fill={s.fill} $selected={s.selected}>
              {s.selected && handles.map(([x, y, round]) => (
                <Handle key={`${x}-${y}`} $x={x} $y={y} $round={round} />
              ))}
            </Shape>
          ))}
        </Artboard>
      </Canvas>
      <ScrollTrack>
        <i />
        <Icon name="caret" size={4} />
      </ScrollTrack>
    </CanvasRow>
    <DocStatus>
      <span>108.67%</span>
      <span>0°</span>
      <StatusGap $w={9} />
      <span>|◀ ◀</span>
      <span>25</span>
      <span>▶ ▶|</span>
      <StatusGap $w={18} />
      <span>选择</span>
      <StatusGap $w={16} />
      <span>▶</span>
      <i />
    </DocStatus>
  </DocumentArea>
);

/* ---------- docked panels ---------- */

const Dock = styled.aside`
  display: flex;
  flex-direction: column;
  min-height: 0;
  border-left: 2px solid #414241;
  background: #535453;
`;

const DockTop = styled.div`
  height: 7px;
  padding-right: 3px;
  background: #434443;
  line-height: 7px;
  text-align: right;
`;

const PanelTabs = styled.header`
  display: flex;
  align-items: center;
  height: 13px;
  padding-right: 3px;
  background: #444544;
  color: #a4a4a4;
`;

const PanelTab = styled.button`
  align-self: stretch;
  padding: 0 5px;
  background: ${(p) => (p.$active ? '#535453' : 'transparent')};
  color: ${(p) => (p.$active ? '#dedede' : '#929292')};
`;

const PanelBody = styled.div`
  display: flex;
  flex-direction: column;
  padding: ${(p) => p.$pad || '2px 4px'};
  ${(p) => p.$grow && 'flex: 1;'}
`;

const FontRow = styled.div`
  display: grid;
  grid-template-columns: ${(p) => (p.$search ? '13px 1fr 6px 11px' : '1fr 6px')};
  align-items: center;
  height: 12px;
`;

const Combo = styled.select`
  width: ${(p) => (p.$w ? `${p.$w}px` : '100%')};
  height: 9px;
  padding-left: 1px;
  background: #454545;
  color: #d8d8d8;
`;

const MetricGrid = styled.div`
  display: grid;
  grid-template-columns: 11px 9px 22px 10px 1fr 11px 9px 24px 6px;
  grid-auto-rows: 13px;
  align-items: center;
  padding: 5px 0 3px;
`;

const PanelRow = styled.div`
  display: flex;
  align-items: center;
  gap: ${(p) => p.$gap || 4}px;
  height: ${(p) => p.$h || 13}px;
  padding-left: ${(p) => p.$indent || 0}px;
  color: ${(p) => (p.$dim ? '#747474' : '#b0b0b0')};
`;

const DockEnd = styled.div`
  height: 21px;
  border-top: 1px solid #434443;
`;

const GradientTop = styled.div`
  display: grid;
  grid-template-columns: 28px 1fr;
`;

const GradientSwatches = styled.div`
  display: flex;
  flex-direction: column;
  gap: 4px;
  padding-top: 2px;
  color: #707070;
`;

const GradientChip = styled.button`
  width: 16px;
  height: 15px;
  background: linear-gradient(90deg, #e13b2e, #ee8a2e 50%, #ecd42a);
`;

const GradientArea = styled.div`
  display: flex;
  gap: 6px;
  padding: 10px 0 9px 5px;
  color: #707070;

  i {
    width: 99px;
    height: 114px;
    background: linear-gradient(90deg, #e02a2f 4%, #e57a31 42%, #e6a52c 68%, #ead829);
  }
`;

const Harmony = styled.span`
  display: flex;
  width: 59px;
  height: 9px;
  background: #443f82;

  i {
    width: 8px;
    border: 1px solid #c9c9d8;
  }
`;

const ArtboardTable = styled.table`
  height: 314px;
  margin-top: 4px;
  width: 100%;
  border-collapse: collapse;
  font-family: 'DejaVu Sans', 'Noto Sans CJK SC', sans-serif;
  line-height: 7px;
  color: #cdcdcd;

  td {
    padding: 0;
    border-bottom: 1px solid #5a5b5a;
  }
  td:first-child {
    width: 24px;
    padding-left: 3px;
  }
`;

const ArtboardRow = styled.tr`
  background: ${(p) => (p.$active ? '#4a6074' : 'transparent')};
`;

const DockFooter = styled.footer`
  display: flex;
  margin-top: auto;
  padding: 0 3px;
  height: 7px;
  overflow: hidden;
`;

const SidePalette = styled.div`
  position: absolute;
  right: 0;
  top: 248px;
  width: 15px;
  height: 29px;
  background: #505150;
`;

const SidePaletteTitle = styled.div`
  display: flex;
  align-items: center;
  justify-content: space-around;
  height: 9px;
  background: #3c3d3c;
`;

const SidePaletteBody = styled.div`
  display: grid;
  place-items: center;
  height: 20px;
`;

const artboards = [
  '1', '2', '2 副本', '3', '3 副本', '4 副本', '3 副本 2', '4', '6', '5',
  '4 副本 2', '4 副本 3', '4 副本 4', '4 副本 5', '4 副本 6', '4 副本 7', '4 副本 8',
  '4 副本 9', '4 副本 10', '4 副本 11', '4 副本 12', '4 副本 13', '4 副本 14', '4 副本 15',
  '4 副本 16', '4 副本 17', '4 副本 18', '1 副本', '6 副本', '4 副本 19', '4 副本 20',
  '2 副本 3', '3 副本 4',
];

const metrics = [
  ['sizeT', '72 pt', 'leading', '106.4'],
  ['vscale', '100%', 'hscale', '100%'],
  ['kern', '自动', 'track', '0'],
];

const PanelHeader = ({ tabs, active }) => (
  <PanelTabs>
    {tabs.map((t) => (
      <PanelTab key={t} $active={t === active}>{t === active ? `⁝ ${t}` : t}</PanelTab>
    ))}
    <Spacer />
    <Icon name="menu" size={6} />
  </PanelTabs>
);

const Metric = ({ icon, value }) => (
  <>
    <Icon name={icon} size={9} />
    <Icon name="step" size={8} />
    <Field aria-label={icon} defaultValue={value} />
    <Icon name="caret" size={5} />
  </>
);

const PropertyDock = () => (
  <Dock>
    <DockTop>»</DockTop>
    <PanelHeader tabs={['字符', '段落', 'OpenType']} active="字符" />
    <PanelBody $pad="3px 4px 1px">
      <FontRow $search>
        <Icon name="search" size={8} />
        <Combo aria-label="字体"><option>庞门正道标题体</option></Combo>
        <Icon name="caret" size={5} />
      </FontRow>
      <FontRow>
        <Combo aria-label="字体样式"><option>-</option></Combo>
        <Icon name="caret" size={5} />
      </FontRow>
      <MetricGrid>
        {metrics.map(([a, av, b, bv]) => (
          <React.Fragment key={a}>
            <Metric icon={a} value={av} />
            <span />
            <Metric icon={b} value={bv} />
          </React.Fragment>
        ))}
      </MetricGrid>
      <PanelRow $h={15} $gap={9}>
        <span>对齐字形</span>
        <Spacer />
        <Icon name="glyphA" size={9} />
        <Icon name="info" size={8} />
      </PanelRow>
      <PanelRow $dim $h={20} $gap={9} $indent={1}>
        <Icon name="dashed" />
        <Icon name="dashed" />
        <Icon name="glyphBox" size={11} />
        <Icon name="glyphA" size={11} />
        <Spacer />
        <Icon name="glyphA" />
        <Icon name="glyphA" />
      </PanelRow>
    </PanelBody>
    <PanelHeader tabs={['外观', '描边', '渐变']} active="渐变" />
    <PanelBody $pad="3px 2px 2px">
      <GradientTop>
        <GradientSwatches>
          <GradientChip aria-label="渐变" />
          <FillStroke $small>
            <StrokeBox />
            <FillBox />
          </FillStroke>
          <Icon name="trash" size={8} />
        </GradientSwatches>
        <div>
          <PanelRow $indent={4}>
            <span>类型:</span>
            <Icon name="gradient" />
            <Icon name="radial" />
            <Icon name="free" />
          </PanelRow>
          <PanelRow $dim $indent={4}>
            <span>描边:</span>
            <Icon name="corner" size={8} />
            <Icon name="corner" size={8} />
            <Icon name="corner" size={8} />
          </PanelRow>
          <PanelRow $dim $indent={11}>
            <Icon name="angle" size={8} />
            <Field $dim $w={34} aria-label="角度" />
          </PanelRow>
          <PanelRow $dim $indent={11}>
            <Icon name="glyphBox" size={8} />
            <Field $dim $w={34} aria-label="长宽比" />
          </PanelRow>
        </div>
      </GradientTop>
      <GradientArea>
        <i />
        <Icon name="trash" size={8} />
      </GradientArea>
      <PanelRow $dim $h={12} $indent={19}>
        <label htmlFor="stop-opacity">不透明度:</label>
        <Field $dim $w={34} id="stop-opacity" />
      </PanelRow>
      <PanelRow $dim $h={12} $indent={3}>
        <Icon name="dropper" size={9} />
        <PanelRow $dim $h={12} $indent={15}>
          <label htmlFor="stop-place">位置:</label>
          <Field $dim $w={34} id="stop-place" />
        </PanelRow>
      </PanelRow>
      <PanelRow $h={4} />
    </PanelBody>
    <PanelHeader tabs={['颜色参考']} active="颜色参考" />
    <PanelBody $pad="2px 2px 5px">
      <PanelRow $h={15} $gap={5}>
        <Swatch aria-label="基色" $size={9} $fill="#625bbd" $edge="#ddd" />
        <Harmony><i /></Harmony>
        <Icon name="caret" size={5} />
        <Icon name="globe" size={9} />
        <Icon name="harmony" size={9} />
      </PanelRow>
    </PanelBody>
    <PanelTabs>
      <PanelTab $active>Overlord - MG动</PanelTab>
      <Spacer />
      <Icon name="menu" size={6} />
    </PanelTabs>
    <PanelBody $grow $pad="3px 4px">
      <PanelRow $h={18} $gap={8}>
        {['triUp', 'triDown', 'sparkle', 'boxes', 'folderPlus', 'puzzle'].map((n) => (
          <IconButton key={n} aria-label={n}><Icon name={n} size={12} /></IconButton>
        ))}
      </PanelRow>
      <PanelRow $h={18} $gap={8}>
        <IconButton aria-label="burst"><Icon name="burst" size={12} /></IconButton>
        <IconButton aria-label="bones"><Icon name="bones" size={12} /></IconButton>
      </PanelRow>
    </PanelBody>
    <PanelHeader tabs={['透明度']} active="透明度" />
    <PanelBody $pad="2px 4px">
      <PanelRow>
        <Combo $w={30} aria-label="混合模式"><option>正常</option></Combo>
        <Icon name="caret" size={5} />
        <label htmlFor="opacity">不透明度:</label>
        <Field $w={22} id="opacity" defaultValue="100%" />
        <Icon name="right" size={5} />
      </PanelRow>
    </PanelBody>
    <PanelTabs>
      <PanelTab $active>路径查找器</PanelTab>
      <Spacer />
      <Icon name="menu" size={6} />
    </PanelTabs>
    <PanelBody $pad="2px 2px 1px">
      <span>形状模式:</span>
      <PanelRow $h={18} $gap={9} $indent={2}>
        {['unite', 'minus', 'intersect', 'exclude'].map((n) => (
          <IconButton key={n} aria-label={n}><Icon name={n} size={9} /></IconButton>
        ))}
        <IconButton $dim>&nbsp; &nbsp;扩展</IconButton>
      </PanelRow>
      <span>路径查找器:</span>
      <PanelRow $h={18} $gap={10} $indent={4}>
        {['divide', 'unite', 'unite', 'intersect', 'outline', 'back'].map((n, i) => (
          <IconButton key={i} aria-label={n}><Icon name={n} size={9} /></IconButton>
        ))}
      </PanelRow>
    </PanelBody>
    <DockEnd />
  </Dock>
);

const ArtboardDock = () => (
  <Dock>
    <DockTop />
    <PanelTabs>
      <PanelTab>属性</PanelTab>
      <PanelTab $active>画板</PanelTab>
      <PanelTab>图层</PanelTab>
    </PanelTabs>
    <ArtboardTable>
      <tbody>
        {artboards.map((name, i) => (
          <ArtboardRow key={i} $active={i === 24}>
            <td>{i + 1}</td>
            <td>画板 {name}</td>
          </ArtboardRow>
        ))}
      </tbody>
    </ArtboardTable>
    <DockFooter>
      <Icon name="scatter" size={7} />
    </DockFooter>
  </Dock>
);

/* ---------- floating colour panel ---------- */

const ColorWindow = styled.section`
  position: absolute;
  left: 608px;
  top: 498px;
  width: 120px;
  border: 1px solid #3d3e3d;
  background: #525352;
`;

const ColorTitle = styled.div`
  display: flex;
  justify-content: flex-end;
  align-items: center;
  gap: 5px;
  height: 6px;
  padding-right: 2px;
  background: #434443;
`;

const ColorBody = styled.div`
  display: grid;
  grid-template-columns: 24px 1fr;
  padding: 0 2px 3px 3px;
`;

const ColorSide = styled.div`
  display: flex;
  flex-direction: column;
  gap: 2px;
  padding-top: 4px;
`;

const Slider = styled.label`
  display: grid;
  grid-template-columns: 7px 51px 5px 19px 1fr;
  align-items: center;
  height: 17px;
  color: #aaa;
`;

const Track = styled.input`
  appearance: none;
  width: 51px;
  height: 12px;
  background: ${(p) => p.$paint} 0 4px / 100% 2px no-repeat;

  &::-webkit-slider-thumb {
    appearance: none;
    width: 6px;
    height: 5px;
    margin-top: 7px;
    background: #c9c9c9;
    clip-path: polygon(50% 0, 100% 50%, 100% 100%, 0 100%, 0 50%);
  }
`;

const QuickColors = styled.div`
  display: flex;
  padding: 3px 0 5px 2px;
`;

const Spectrum = styled.div`
  width: 107px;
  height: 67px;
  margin: 0 0 6px 2px;
  background: linear-gradient(rgba(255, 255, 255, 0.9), rgba(255, 255, 255, 0) 45%, rgba(0, 0, 0, 0) 52%, rgba(0, 0, 0, 0.92)),
    linear-gradient(90deg, #f01818, #e8e81c 17%, #14d414 34%, #20dede 50%, #1414f0 67%, #f018e8 84%, #f0182c);
`;

const Pointer = styled.svg`
  position: absolute;
  left: ${(p) => p.$x}px;
  top: ${(p) => p.$y}px;
`;

const ColorPanel = () => {
  const [hsb, setHsb] = useState([250, 68, 82]);
  const rows = [
    ['H', 359, 'linear-gradient(90deg, #c07560, #b9b45c 18%, #5fb86a 36%, #5cb4b8 52%, #6260c0 68%, #b95cb4 84%, #b45c78)', '243.2', '°'],
    ['S', 120, 'linear-gradient(90deg, #c8c8c8, #605ac0 60%, #2014b8)', '65.72', '%'],
    ['B', 100, 'linear-gradient(90deg, #111, #4a4590 60%, #7d74ee)', '78.82', '%'],
  ];
  return (
    <ColorWindow>
      <ColorTitle>
        <span>«</span>
        <Icon name="close" size={5} />
      </ColorTitle>
      <PanelHeader tabs={['颜色']} active="颜色" />
      <ColorBody>
        <ColorSide>
          <ToolRow>
            <Icon name="mini" size={7} />
            <Icon name="swap" size={7} />
          </ToolRow>
          <FillStroke $small>
            <StrokeBox />
            <FillBox />
          </FillStroke>
        </ColorSide>
        <div>
          {rows.map(([name, max, paint, value, unit], i) => (
            <Slider key={name}>
              {name}
              <Track
                type="range"
                max={max}
                value={hsb[i]}
                $paint={paint}
                onChange={(e) => setHsb(hsb.map((v, j) => (j === i ? +e.target.value : v)))}
              />
              <span />
              <Field aria-label={`${name} 值`} defaultValue={value} />
              {unit}
            </Slider>
          ))}
        </div>
      </ColorBody>
      <QuickColors>
        <Swatch aria-label="无" $size={7} $fill={noPaint} $edge="#888" />
        <Swatch aria-label="黑" $size={7} $fill="#0c0c0c" $edge="#0c0c0c" />
        <Swatch aria-label="白" $size={7} $fill="#f4f4f4" $edge="#f4f4f4" />
      </QuickColors>
      <Spectrum />
    </ColorWindow>
  );
};

/* ---------- top bars ---------- */

const menus = ['文件(F)', '编辑(E)', '对象(O)', '文字(T)', '选择(S)', '效果(C)', '视图(V)', '窗口(W)', '帮助(H)'];

const TopMenu = () => (
  <MenuBar>
    <AppLogo>Ai</AppLogo>
    <Icon name="home" size={10} />
    <MenuItems>
      {menus.map((m) => <button key={m}>{m}</button>)}
    </MenuItems>
    <Icon name="grid" size={9} />
    <Icon name="caret" size={5} />
    <Spacer />
    <Icon name="window" size={8} />
    <MenuSearch>
      <Icon name="search" size={7} />
      <input placeholder="搜索 Adobe 帮助" aria-label="搜索" />
    </MenuSearch>
  </MenuBar>
);

const Controls = () => (
  <ControlBar>
    <span>矩形</span>
    <Swatch aria-label="填色" $fill="#625bbd" />
    <Icon name="caret" size={5} />
    <Swatch aria-label="描边颜色" $fill={noPaint} />
    <Icon name="caret" size={5} />
    <label htmlFor="stroke-width">描边:</label>
    <Icon name="step" size={8} />
    <Field id="stroke-width" />
    <Icon name="caret" size={5} />
    <StrokeProfile aria-label="变量宽度" />
    <BrushPicker><i />基本</BrushPicker>
    <Icon name="caret" size={5} />
    <label htmlFor="bar-opacity">不透明度:</label>
    <Field id="bar-opacity" defaultValue="100%" />
    <Icon name="right" size={5} />
    <span>样式:</span>
    <Swatch aria-label="样式" $fill="#e4e4e4" $size={10} />
    <Icon name="caret" size={5} />
    {['globe', 'docset', 'alignL', 'alignC', 'alignR', 'alignT', 'alignM', 'alignB'].map((n) => (
      <IconButton key={n} $start aria-label={n}><Icon name={n} size={9} /></IconButton>
    ))}
    <span>形状:</span>
    <Icon name="width2" size={8} />
    <Field $w={31} aria-label="宽" defaultValue="110 pt" />
    <Icon name="link" />
    <Field $w={30} aria-label="高" defaultValue="41 pt" />
    <Icon name="height" />
    <Icon name="corner" />
    <Icon name="step" size={8} />
    <Field $w={26} aria-label="圆角" defaultValue="0 pt" />
    <span>变换</span>
    <Icon name="scatter" />
    <Icon name="edit" />
    <Icon name="caret" size={5} />
    <Icon name="edit" />
    <Icon name="caret" size={5} />
  </ControlBar>
);

export default function App() {
  return (
    <>
      <GlobalStyle />
      <Desktop>
        <DesktopIcons aria-hidden="true">
          <span>s</span>
          <span>a</span>
          <span />
          <span>-</span>
          <span>9</span>
          <span>g</span>
          <span>-</span>
          <span>o</span>
          <span>-</span>
        </DesktopIcons>
        <Explorer />
        <AppWindow>
          <TopMenu />
          <Controls />
          <Workspace>
            <Tools />
            <Document />
            <PropertyDock />
            <ArtboardDock />
          </Workspace>
          <SidePalette>
            <SidePaletteTitle>
              <span>»</span>
              <Icon name="close" size={5} />
            </SidePaletteTitle>
            <SidePaletteBody>
              <Icon name="globe" size={8} />
            </SidePaletteBody>
          </SidePalette>
          <ColorPanel />
          <Pointer $x={681} $y={527} width="6" height="9" viewBox="0 0 6 9">
            <path d="M0 0v8l2-2 1.500 3L5 8.500 3.500 5.500H6z" fill="#fff" stroke="#333" strokeWidth=".4" />
          </Pointer>
          <Pointer $x={310} $y={55} width="5" height="5" viewBox="0 0 5 5">
            <path d="M0 1l4-1v5z" fill="#555" />
          </Pointer>
        </AppWindow>
      </Desktop>
    </>
  );
}
